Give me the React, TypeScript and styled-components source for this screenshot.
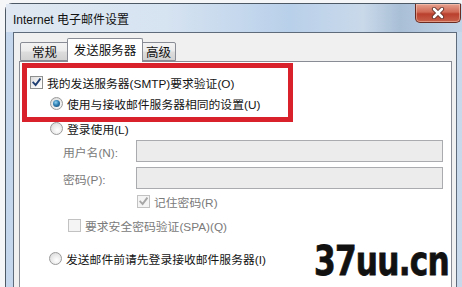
import styled, { createGlobalStyle } from 'styled-components';

const GlobalStyle = createGlobalStyle`
  html, body {
    margin: 0;
    padding: 0;
    background: #ffffff;
  }
  body {
    font-family: "Liberation Sans", "Noto Sans CJK SC", sans-serif;
    font-size: 12px;
    color: #1a1a1a;
  }
`;

const Stage = styled.div`
  width: 462px;
  height: 287px;
  overflow: hidden;
  box-sizing: border-box;
  padding: 3px 0 0 5px;
  background: #f4f6f8;
`;

const Window = styled.div`
  width: 460px;
  height: 300px;
  box-sizing: border-box;
  border: 1px solid #4e5966;
  border-radius: 7px 7px 0 0;
  padding: 0 7px;
  display: flex;
  flex-direction: column;
  background: linear-gradient(to right, #c3d6ec 0%, #dbe7f4 40%, #c8d9ec 100%);
`;

const TitleBar = styled.div`
  height: 28px;
  margin: 0 -7px;
  padding-left: 7px;
  display: flex;
  align-items: flex-start;
  justify-content: space-between;
  background: linear-gradient(to right, #dfe8f2 0%, #d6e3f1 35%, #b9d0ea 62%, #c9d9ea 78%, #a9bfd6 86%, #c3d5e8 100%);
`;

const Title = styled.div`
  height: 28px;
  display: flex;
  align-items: center;
  font-size: 12px;
  color: #111;
`;

const CloseButton = styled.div`
  width: 46px;
  height: 19px;
  margin-right: 3px;
  box-sizing: border-box;
  border: 1px solid #6a2c22;
  border-top: none;
  border-radius: 0 0 5px 5px;
  display: flex;
  align-items: center;
  justify-content: center;
  background: linear-gradient(#e6a08f 0%, #d06a55 45%, #b9402d 55%, #c8604a 100%);
  box-shadow: inset 0 0 0 1px rgba(255, 220, 200, 0.45);
`;

const Client = styled.div`
  flex: 1;
  display: flex;
  flex-direction: column;
  border: 1px solid #5d6b7b;
  border-bottom: none;
  background: #f0f0f0;
  padding: 5px 4px 0 5px;
`;

const TabRow = styled.div`
  height: 23px;
  display: flex;
  align-items: flex-end;
  padding-left: 1px;
`;

const Tab = styled.div<{ $active?: boolean; $w: number }>`
  width: ${({ $w }) => $w}px;
  height: ${({ $active }) => ($active ? 24 : 19)}px;
  box-sizing: border-box;
  border: 1px solid #898c95;
  border-bottom: ${({ $active }) => ($active ? 'none' : '1px solid #898c95')};
  border-radius: 2px 2px 0 0;
  margin: ${({ $active }) => ($active ? '0 -2px -1px' : '0')};
  position: relative;
  z-index: ${({ $active }) => ($active ? 1 : 0)};
  display: flex;
  align-items: center;
  justify-content: center;
  padding-bottom: ${({ $active }) => ($active ? 2 : 0)}px;
  font-size: 12.5px;
  color: #111;
  background: ${({ $active }) =>
    $active ? '#ffffff' : 'linear-gradient(#f3f3f3 0%, #ebebeb 48%, #dddddd 52%, #d2d2d2 100%)'};
`;

const TabPanel = styled.div`
  flex: 1;
  position: relative;
  border: 1px solid #898c95;
  background: #ffffff;
  display: flex;
  flex-direction: column;
  font-size: 11.8px;
`;

const Row = styled.div<{ $top: number; $indent: number; $h?: number; $muted?: boolean }>`
  height: ${({ $h }) => $h ?? 20}px;
  margin-top: ${({ $top }) => $top}px;
  padding-left: ${({ $indent }) => $indent}px;
  display: flex;
  align-items: center;
  gap: 4px;
  color: ${({ $muted }) => ($muted ? '#7a7a7a' : '#141414')};
  white-space: nowrap;
`;

const FieldLabel = styled.span`
  width: 73px;
  flex: none;
`;

const Field = styled.div`
  width: 307px;
  height: 22px;
  box-sizing: border-box;
  border: 1px solid #a9abaf;
  background: #ececec;
  margin-left: -4px;
`;

const Box = styled.span<{ $disabled?: boolean }>`
  width: 13px;
  height: 13px;
  flex: none;
  box-sizing: border-box;
  border: 1px solid ${({ $disabled }) => ($disabled ? '#c2c2c2' : '#8e8f8f')};
  background: ${({ $disabled }) =>
    $disabled ? '#f4f4f4' : 'linear-gradient(135deg, #dcdcdc 0%, #f6f6f6 60%, #ffffff 100%)'};
  display: flex;
  align-items: center;
  justify-content: center;
`;

const Radio = styled.span<{ $checked?: boolean }>`
  width: 13px;
  height: 13px;
  flex: none;
  box-sizing: border-box;
  border-radius: 50%;
  border: 1px solid #9a9a9a;
  background: radial-gradient(circle at 60% 65%, #ffffff 0%, #e6e6e6 60%, #cfcfcf 100%);
  display: flex;
  align-items: center;
  justify-content: center;

  &::after {
    content: '';
    display: ${({ $checked }) => ($checked ? 'block' : 'none')};
    width: 7px;
    height: 7px;
    border-radius: 50%;
    background: radial-gradient(circle at 40% 35%, #8fd0f0 0%, #2e7fb4 45%, #173f66 100%);
  }
`;

const RedFrame = styled.div`
  position: absolute;
  left: 2px;
  top: 1px;
  width: 271px;
  height: 59px;
  box-sizing: border-box;
  border: 5px solid #d9212b;
  pointer-events: none;
`;

const Watermark = styled.div`
  position: absolute;
  left: 294px;
  top: 179px;
  font-family: "DejaVu Sans", sans-serif;
  font-weight: 700;
  font-size: 40px;
  line-height: 1;
  color: #111;
  letter-spacing: -1px;
  -webkit-text-stroke: 0.8px #111;
  transform: scaleX(0.78);
  transform-origin: left top;
`;

function Check({ disabled }: { disabled?: boolean }) {
  return (
    <svg width="9" height="9" viewBox="0 0 9 9">
      <path
        d="M1.3 4.6 L3.6 7 L7.8 1.4"
        fill="none"
        stroke={disabled ? '#a6a6a6' : '#1f3f73'}
        strokeWidth="1.9"
        strokeLinecap="square"
      />
    </svg>
  );
}

function CloseGlyph() {
  return (
    <svg width="14" height="12" viewBox="0 0 14 12">
      <path d="M3 2 L11 10 M11 2 L3 10" stroke="#5a2a22" strokeWidth="4.2" strokeLinecap="round" />
      <path d="M3 2 L11 10 M11 2 L3 10" stroke="#ffffff" strokeWidth="2.6" strokeLinecap="round" />
    </svg>
  );
}

export default function App() {
  return (
    <>
      <GlobalStyle />
      <Stage>
        <Window>
          <TitleBar>
            <Title>Internet 电子邮件设置</Title>
            <CloseButton>
              <CloseGlyph />
            </CloseButton>
          </TitleBar>
          <Client>
            <TabRow>
              <Tab $w={49}>常规</Tab>
              <Tab $w={76} $active>
                发送服务器
              </Tab>
              <Tab $w={35}>高级</Tab>
            </TabRow>
            <TabPanel>
              <Row $top={10} $indent={10}>
                <Box>
                  <Check />
                </Box>
                我的发送服务器(SMTP)要求验证(O)
              </Row>
              <Row $top={1} $indent={30}>
                <Radio $checked />
                使用与接收邮件服务器相同的设置(U)
              </Row>
              <Row $top={5} $indent={30}>
                <Radio />
                登录使用(L)
              </Row>
              <Row $top={2} $indent={43} $h={22} $muted>
                <FieldLabel>用户名(N):</FieldLabel>
                <Field />
              </Row>
              <Row $top={5} $indent={43} $h={22} $muted>
                <FieldLabel>密码(P):</FieldLabel>
                <Field />
              </Row>
              <Row $top={2} $indent={117} $muted>
                <Box $disabled>
                  <Check disabled />
                </Box>
                记住密码(R)
              </Row>
              <Row $top={4} $indent={48} $muted>
                <Box $disabled />
                要求安全密码验证(SPA)(Q)
              </Row>
              <Row $top={13} $indent={29}>
                <Radio />
                发送邮件前请先登录接收邮件服务器(I)
              </Row>
              <RedFrame />
              <Watermark>37uu.cn</Watermark>
            </TabPanel>
          </Client>
        </Window>
      </Stage>
    </>
  );
}
